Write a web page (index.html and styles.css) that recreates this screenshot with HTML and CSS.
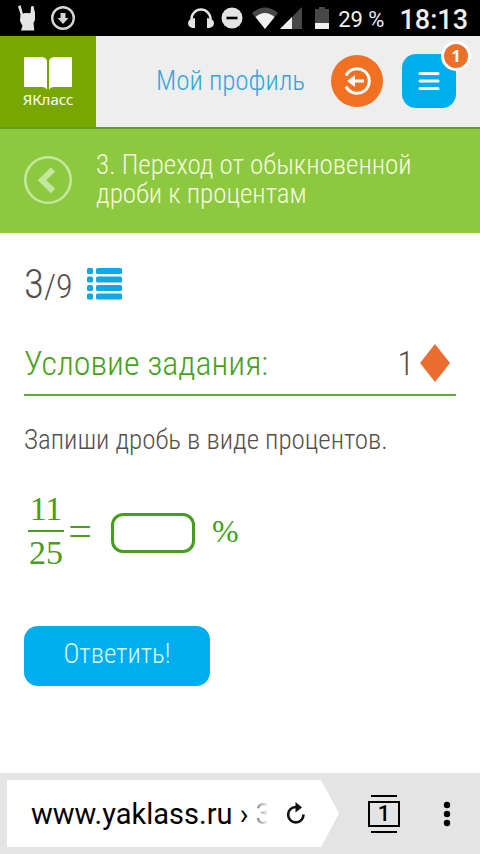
FILE: index.html
```html
<!DOCTYPE html>
<html lang="ru">
<head>
<meta charset="utf-8">
<meta name="viewport" content="width=device-width, initial-scale=1">
<title>ЯКласс</title>
<link rel="stylesheet" href="styles.css">
</head>
<body>
<div class="status">
  <svg class="icon-horns" width="18" height="26" viewBox="0 0 18 26"><path fill="#e4e4e4" d="M0 1.500L2.500 0 5 9l1-1 2 .3 1-.6 1.500.6 2-.3.5-6Q14 .5 15.500 1L17 8v7l-1.500 3 .8 7.500H3l1.500-4.500L2 16l.5-7Z"/></svg>
  <svg width="24" height="24" viewBox="0 0 24 24"><circle cx="12" cy="12" r="10.800" fill="none" stroke="#d5d5d5" stroke-width="2.400"/><path fill="#d5d5d5" d="M9.500 7h5v5h3L12 18l-5.500-6h3Z"/></svg>
  <span class="spacer"></span>
  <svg width="26" height="21" viewBox="0 0 26 21"><path fill="none" stroke="#e4e4e4" stroke-width="2.500" d="M3.500 13v-2a9.500 9.500 0 0 1 19 0v2"/><path fill="#e4e4e4" d="M7 10v10H4.500Q0 19 0 15t7-5Zm12 0v10h2.500Q26 19 26 15t-7-5Z"/></svg>
  <svg class="icon-dnd" width="22" height="22" viewBox="0 0 22 22"><circle cx="11" cy="11" r="10.500" fill="#e4e4e4"/><path stroke="#000" stroke-width="2.600" d="M5.500 11h11"/></svg>
  <svg class="icon-wifi" width="26" height="22" viewBox="0 0 26 22"><path fill="#484848" d="M0 6q13-11 26 0L13 22Z"/><path fill="#f0f0f0" d="M3.500 10q9.500-8 19 0L13 22Z"/></svg>
  <svg width="22" height="22" viewBox="0 0 22 22"><path fill="#484848" d="M22 0v22H0Z"/><path fill="#f0f0f0" d="M12 10v12H0Z"/></svg>
  <svg class="icon-battery" width="14" height="22" viewBox="0 0 14 22"><path fill="#484848" d="M0 2h4V0h6v2h4v20H0Z"/><path fill="#f0f0f0" d="M0 16h14v6H0Z"/></svg>
  <span class="percent">29 %</span>
  <time class="clock">18:13</time>
</div>
<header class="header">
  <a class="logo" href="#">
    <svg width="48" height="34" viewBox="0 0 48 34"><path fill="#fff" d="M0 0h17q5 0 6 4v29q-1-3-5-3H0ZM48 0H31q-5 0-6 4v29q1-3 5-3h18Z"/></svg>
    <span>ЯКласс</span>
  </a>
  <nav class="nav">
    <a class="profile" href="#">Мой профиль</a>
    <button class="logout" aria-label="Выход"><svg width="28" height="30" viewBox="0 0 28 30"><path fill="none" stroke="#fff" stroke-width="3" d="M3 9.500A12.300 12.300 0 1 1 3 20.500"/><path fill="#fff" d="M4 15l8-6v4.400h9v3.200h-9V21Z"/></svg></button>
    <button class="menu" aria-label="Меню"><svg width="22" height="20" viewBox="0 0 22 20"><path stroke="#fff" stroke-width="3" stroke-linecap="round" d="M2 2.500h18M2 10h18M2 17.500h18"/></svg><span class="badge">1</span></button>
  </nav>
</header>
<div class="topic">
  <a class="back" href="#" aria-label="Назад"><svg width="48" height="48" viewBox="0 0 48 48"><circle cx="24" cy="24" r="22.700" fill="none" stroke="#c4e89b" stroke-width="2.600"/><path fill="none" stroke="#c4e89b" stroke-width="6" d="M29 13.500L18 24.200 29 35"/></svg></a>
  <h1>3. Переход от обыкновенной дроби к процентам</h1>
</div>
<main class="content">
  <div class="progress">
    <span class="current">3</span><span class="total">/9</span>
    <a class="list" href="#" aria-label="Список заданий"><svg width="36" height="32" viewBox="0 0 36 32"><g fill="#12a7e6"><rect x="0" y="0" width="6" height="6" rx="1.500"/><rect x="9" y="0" width="26" height="6" rx="1.500"/><rect x="0" y="8.500" width="6" height="6" rx="1.500"/><rect x="9" y="8.500" width="26" height="6" rx="1.500"/><rect x="0" y="17" width="6" height="6" rx="1.500"/><rect x="9" y="17" width="26" height="6" rx="1.500"/><rect x="0" y="25.500" width="6" height="6" rx="1.500"/><rect x="9" y="25.500" width="26" height="6" rx="1.500"/></g></svg></a>
  </div>
  <div class="task-head">
    <h2>Условие задания:</h2>
    <span class="points">1<svg width="30" height="38" viewBox="0 0 30 38"><path fill="#ec6d30" d="M15 0l15 19-15 19L0 19Z"/></svg></span>
  </div>
  <p class="text">Запиши дробь в виде процентов.</p>
  <form class="answer">
    <div class="equation">
      <span class="fraction"><span class="top">11</span><span class="bottom">25</span></span>
      <label class="equals" for="value">=</label>
      <input id="value" class="value" type="text" aria-label="Ответ в процентах">
      <span class="sign">%</span>
    </div>
    <button class="submit" type="button">Ответить!</button>
  </form>
</main>
<footer class="browser">
  <div class="address">
    <span class="url">www.yaklass.ru › <span class="cut">3</span></span>
    <button class="reload" aria-label="Обновить"><svg width="20" height="24" viewBox="0 0 20 24"><path fill="none" stroke="#111" stroke-width="2.600" d="M17.500 12.500A7.700 7.700 0 1 1 10 5"/><path fill="#111" d="M9.500 0L16 5.500l-6.500 5Z"/></svg></button>
  </div>
  <button class="tabs" aria-label="Вкладки"><span>1</span></button>
  <button class="more" aria-label="Ещё"><svg width="8" height="26" viewBox="0 0 8 26"><circle cx="4" cy="4" r="3.200"/><circle cx="4" cy="13" r="3.200"/><circle cx="4" cy="22" r="3.200"/></svg></button>
</footer>
</body>
</html>
```
FILE: styles.css
```css
* { box-sizing: border-box; }
body {
  margin: 0;
  min-height: 100vh;
  display: flex;
  flex-direction: column;
  background: #fff;
  color: #55504a;
  font-family: "Roboto Condensed", Roboto, sans-serif;
  font-weight: 300;
}
svg { display: block; flex: none; }
a { text-decoration: none; color: inherit; }
button { border: 0; padding: 0; background: none; font: inherit; color: inherit; }
h1, h2, p { margin: 0; font-weight: 300; }

.status {
  display: flex;
  align-items: center;
  height: 36px;
  padding: 0 12px 0 18px;
  background: #000;
  color: #eee;
  font-family: Roboto, sans-serif;
}
.icon-horns { margin-right: 15px; }
.spacer { flex: 1; }
.icon-dnd { margin: 0 9px 0 7px; }
.icon-wifi { margin-right: 2px; }
.icon-battery { margin: 0 9px 0 13px; }
.percent { padding-top: 2px; font-size: 22px; font-weight: 400; }
.clock { margin-left: 15px; padding-top: 4px; font-size: 27px; font-weight: 500; }

.header {
  display: flex;
  height: 93px;
  background: #eee;
  border-bottom: 2px solid #5f9d25;
}
.logo {
  display: flex;
  flex-direction: column;
  align-items: center;
  width: 96px;
  padding-top: 21px;
  background: #78a800;
  color: #fff;
  font: 400 15px/16px "Noto Sans", sans-serif;
}
.nav {
  flex: 1;
  display: flex;
  align-items: center;
  justify-content: flex-end;
  padding: 0 24px 2px 0;
}
.profile { color: #2ea7dc; font-size: 27px; }
.logout {
  display: grid;
  place-items: center;
  width: 52px;
  height: 52px;
  margin: 0 19px 0 26px;
  border-radius: 50%;
  background: #f27022;
}
.menu {
  position: relative;
  display: grid;
  place-items: center;
  width: 54px;
  height: 54px;
  border-radius: 14px;
  background: #00aeef;
}
.badge {
  position: absolute;
  top: -13px;
  right: -15px;
  width: 30px;
  height: 30px;
  border: 3px solid #fff;
  border-radius: 50%;
  background: #ec7027;
  color: #fff;
  font: 700 16px/24px "Open Sans", sans-serif;
}

.topic {
  display: flex;
  align-items: center;
  gap: 24px;
  min-height: 104px;
  padding: 0 24px 2px;
  background: #8cc840;
  color: #f6fcdf;
}
.topic h1 { font-size: 27px; line-height: 29px; }

.content { flex: 1; padding: 22px 24px 24px; }
.progress { display: flex; align-items: center; height: 58px; }
.current { font-size: 41px; }
.total { font-size: 34px; padding-top: 3px; }
.list { margin-left: 14px; }
.task-head {
  display: flex;
  align-items: center;
  justify-content: space-between;
  height: 64px;
  margin-top: 19px;
  border-bottom: 2px solid #5bac32;
}
.task-head h2 { color: #47a11c; font-size: 34px; }
.points { display: flex; align-items: center; gap: 6px; padding-right: 6px; font-size: 34px; }
.text { margin-top: 26px; font-size: 27px; line-height: 36px; }
.equation {
  display: flex;
  align-items: center;
  height: 84px;
  margin-top: 33px;
  color: #459f1c;
  font-family: "Liberation Serif", serif;
  font-size: 34px;
  font-weight: 400;
}
.fraction { display: flex; flex-direction: column; width: 36px; margin-left: 4px; padding-bottom: 4px; text-align: center; line-height: 42px; }
.top { border-bottom: 2px solid #459f1c; }
.equals { width: 28px; margin-left: 2px; padding-bottom: 4px; text-align: center; font-size: 42px; line-height: 42px; }
.sign { padding-bottom: 4px; font-size: 32px; }
.value {
  width: 84px;
  height: 40px;
  margin: 0 17px;
  padding: 0 8px;
  border: 3px solid #459f1c;
  border-radius: 12px;
  background: #fff;
  color: inherit;
  font: inherit;
}
.submit {
  width: 186px;
  height: 60px;
  margin-top: 51px;
  padding-bottom: 4px;
  border-radius: 14px;
  background: #00aeef;
  color: #d5fbff;
  font-size: 27px;
}

.browser {
  display: flex;
  align-items: center;
  height: 81px;
  padding: 0 29px 0 7px;
  background: #e4e4e4;
  color: #000;
  font-family: Roboto, sans-serif;
  font-weight: 400;
}
.address {
  flex: 1;
  display: flex;
  align-items: center;
  justify-content: space-between;
  height: 67px;
  padding: 0 33px 0 24px;
  background: #fff;
  clip-path: polygon(0 0, calc(100% - 18px) 0, 100% 50%, calc(100% - 18px) 100%, 0 100%);
}
.url { display: flex; white-space: pre; font-size: 29px; }
.cut {
  width: 16px;
  margin-right: -6px;
  background: linear-gradient(90deg, #888, #ddd 10px, #fff 11px);
  background-clip: text;
  color: transparent;
}
.tabs {
  margin: 0 43px 0 29px;
  padding: 4px 0;
  background: linear-gradient(#000, #000) center top / 26px 2px no-repeat, linear-gradient(#000, #000) center bottom / 26px 2px no-repeat;
}
.tabs span { display: block; width: 32px; margin: 2px 0; border: 2px solid #000; font-size: 22px; font-weight: 500; line-height: 22px; }
```
